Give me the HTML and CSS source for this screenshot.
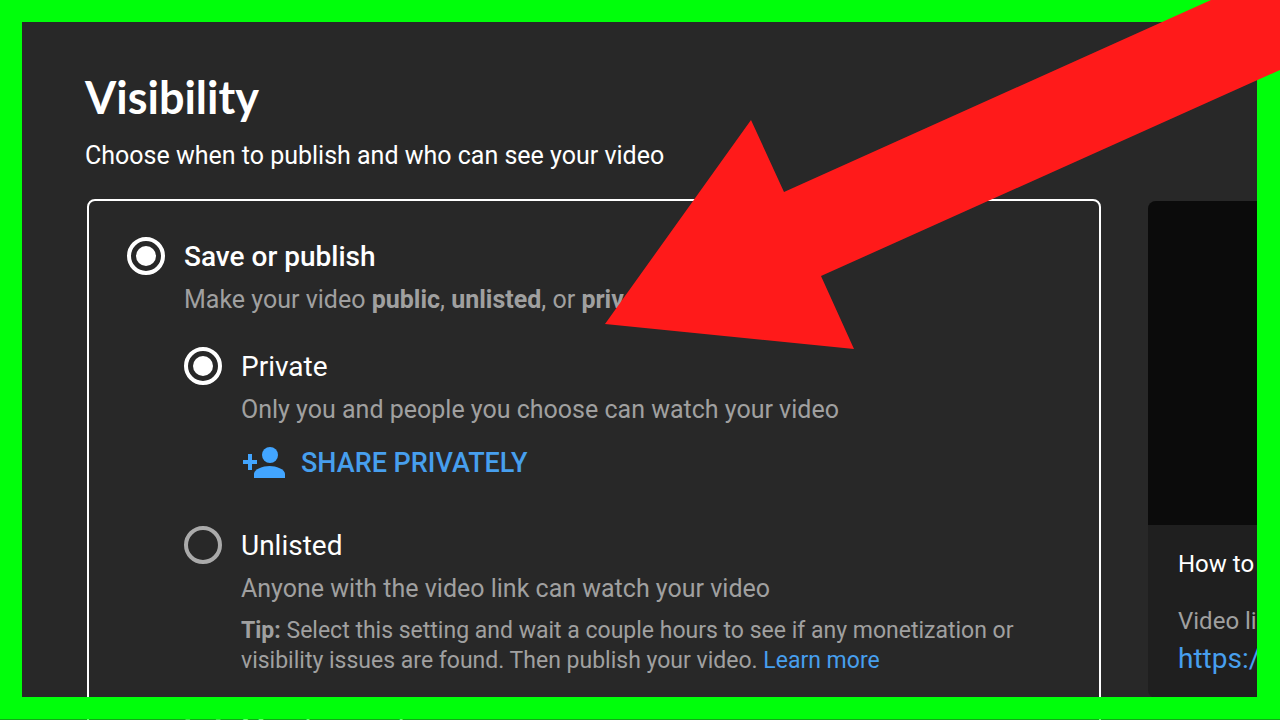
FILE: index.html
```html
<!DOCTYPE html>
<html lang="en">
<head>
    <meta charset="UTF-8">
    <meta name="viewport" content="width=device-width, initial-scale=1.0">
    <title>Visibility</title>
    <link rel="stylesheet" href="styles.css">
</head>
<body>
    <div class="page">
        <header class="head">
            <h1>Visibility</h1>
            <p>Choose when to publish and who can see your video</p>
        </header>
        <main class="content">
            <form class="box">
                <div class="option">
                    <input type="radio" name="mode" id="save" checked>
                    <div class="option-text">
                        <label class="title bold" for="save">Save or publish</label>
                        <p class="desc">Make your video <b>public</b>, <b>unlisted</b>, or <b>private</b></p>
                        <div class="sub-list">
                            <div class="option">
                                <input type="radio" name="visibility" id="private" checked>
                                <div class="option-text">
                                    <label class="title" for="private">Private</label>
                                    <p class="desc">Only you and people you choose can watch your video</p>
                                    <button type="button" class="share">
                                        <svg viewBox="0 0 44 32" width="44" height="32" aria-hidden="true">
                                            <path d="M7 7h4v6h5v4h-5v6H7v-6H2v-4h5z"/>
                                            <circle cx="29" cy="8" r="8"/>
                                            <path d="M13 31v-4c0-5 9-8 15.500-8S44 22 44 27v4z"/>
                                        </svg>
                                        SHARE PRIVATELY
                                    </button>
                                </div>
                            </div>
                            <div class="option">
                                <input type="radio" name="visibility" id="unlisted">
                                <div class="option-text">
                                    <label class="title" for="unlisted">Unlisted</label>
                                    <p class="desc">Anyone with the video link can watch your video</p>
                                    <p class="tip"><b>Tip:</b> Select this setting and wait a couple hours to see if any monetization or visibility issues are found. Then publish your video. <a href="#">Learn more</a></p>
                                </div>
                            </div>
                            <div class="option">
                                <input type="radio" name="visibility" id="members">
                                <div class="option-text">
                                    <label class="title" for="members">Members only</label>
                                </div>
                            </div>
                        </div>
                    </div>
                </div>
            </form>
            <aside class="preview">
                <div class="video"></div>
                <div class="info">
                    <p class="name">How to</p>
                    <p class="link-label">Video link</p>
                    <a href="#">https://</a>
                </div>
            </aside>
        </main>
    </div>
    <div class="frame"></div>
    <svg class="arrow" viewBox="0 0 676 350" width="676" height="350" aria-hidden="true">
        <path d="M1 324L147 120L180 192L607 0H676V70L217 276L250 349z"/>
    </svg>
</body>
</html>
```

FILE: styles.css
```css
*{
    padding: 0;
    margin: 0;
    box-sizing: border-box;
}
body{
    position: relative;
    height: 100vh;
    overflow: hidden;
    background-color: #282828;
    color: white;
    font-family: Roboto, sans-serif;
}
a{
    color: #479fee;
    text-decoration: none;
}
.page{
    padding-top: 67px;
}
.head{
    padding-left: 85px;
}
.head h1{
    font-family: Lato, sans-serif;
    font-size: 45px;
    font-weight: 700;
    line-height: 60px;
}
.head p{
    margin-top: 14px;
    font-size: 25px;
    line-height: 30px;
}
.content{
    display: grid;
    grid-template-columns: minmax(0, 1fr) 132px;
    align-items: start;
    gap: 47px;
    margin-top: 28px;
    padding-left: 87px;
}
.box{
    padding: 36px 38px 60px;
    border: 2px solid white;
    border-radius: 8px;
}
.option{
    display: flex;
    gap: 19px;
}
.option-text{
    flex: 1;
}
.option input{
    display: grid;
    place-items: center;
    flex: none;
    width: 38px;
    height: 38px;
    appearance: none;
    border: 4px solid #aaa;
    border-radius: 50%;
}
.option input:checked{
    border-color: white;
}
.option input:checked::before{
    content: "";
    width: 20px;
    height: 20px;
    border-radius: 50%;
    background-color: white;
}
.title{
    display: block;
    font-size: 28px;
    line-height: 40px;
}
.bold{
    font-weight: 500;
}
.desc{
    margin-top: 8px;
    color: #a0a0a0;
    font-size: 25px;
    line-height: 30px;
}
.sub-list{
    display: flex;
    flex-direction: column;
    gap: 32px;
    margin-top: 32px;
}
.share{
    display: flex;
    align-items: center;
    gap: 16px;
    height: 38px;
    margin: 19px 0 12px;
    border: none;
    background: none;
    color: #479fee;
    font-family: inherit;
    font-size: 27px;
    font-weight: 500;
    line-height: 38px;
}
.share svg{
    fill: #42a5ff;
}
.tip{
    margin-top: 12px;
    color: #a0a0a0;
    font-size: 23px;
    line-height: 30px;
}
.preview{
    margin-top: 2px;
    height: 497px;
    overflow: hidden;
    border-radius: 8px 0 0 8px;
    background-color: #1f1f1f;
    white-space: nowrap;
}
.video{
    height: 324px;
    background-color: #0b0b0b;
}
.info{
    padding: 24px 0 0 30px;
    font-size: 24px;
    line-height: 30px;
}
.link-label{
    margin-top: 27px;
    color: #a0a0a0;
}
.info a{
    display: block;
    margin-top: 8px;
    font-size: 28px;
}
/* the last pixel row lets the page show through */
.frame{
    position: absolute;
    inset: 0 0 1px;
    border: 22px solid #00ff0b;
    border-right-width: 23px;
    box-shadow: 0 1px rgba(0, 255, 11, 0.6);
}
.arrow{
    position: absolute;
    top: 0;
    right: 0;
    fill: #ff1a1a;
}
```
